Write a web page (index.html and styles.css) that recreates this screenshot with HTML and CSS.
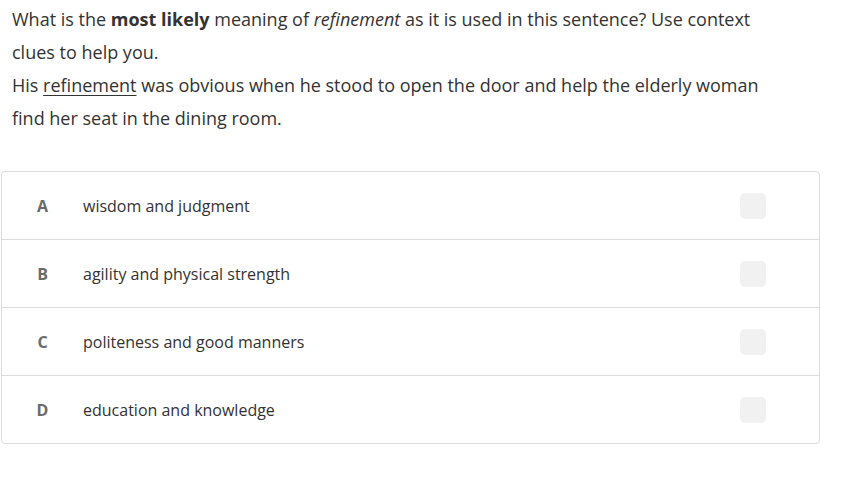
FILE: index.html
```html
<!DOCTYPE html>
<html>
<head>
<meta charset="utf-8">
<link rel="stylesheet" href="styles.css">
</head>
<body>
<div class="page">
  <div class="question">
    <p class="prompt">What is the <strong>most likely</strong> meaning of <em>refinement</em> as it is used in this sentence? Use context clues to help you.</p>
    <p class="passage">His <span class="u">refinement</span> was obvious when he stood to open the door and help the elderly woman find her seat in the dining room.</p>
  </div>
  <div class="choices">
    <div class="choice"><span class="letter">A</span><span class="text">wisdom and judgment</span><span class="box"></span></div>
    <div class="choice"><span class="letter">B</span><span class="text">agility and physical strength</span><span class="box"></span></div>
    <div class="choice"><span class="letter">C</span><span class="text">politeness and good manners</span><span class="box"></span></div>
    <div class="choice"><span class="letter">D</span><span class="text">education and knowledge</span><span class="box"></span></div>
  </div>
</div>
</body>
</html>
```
FILE: styles.css
```css
html, body {
  margin: 0;
  padding: 0;
  background: #fff;
}
body {
  font-family: "Open Sans", "Liberation Sans", sans-serif;
  color: #333;
}
.page {
  width: 820px;
  padding: 3px 0 0 1px;
}
.question {
  padding: 0 11px;
  font-size: 18px;
  line-height: 33px;
  width: 775px;
}
.question p {
  margin: 0;
}
.question strong {
  font-weight: 700;
}
.u {
  text-decoration: underline;
  text-underline-offset: 3px;
  text-decoration-thickness: 1px;
}
.choices {
  margin-top: 36px;
  border: 1px solid #dcdcdc;
  border-radius: 4px;
  width: 817px;
}
.choice {
  display: flex;
  align-items: center;
  height: 68px;
  padding-top: 1px;
  box-sizing: border-box;
  border-top: 1px solid #dcdcdc;
}
.choice:first-child {
  border-top: none;
  height: 67px;
}
.letter {
  width: 81px;
  text-align: center;
  font-weight: 700;
  font-size: 16px;
  color: #6b6b6b;
}
.text {
  flex: 1;
  font-size: 16px;
  color: #333;
}
.box {
  width: 26px;
  height: 26px;
  border-radius: 5px;
  background: #f1f1f1;
  margin-right: 53px;
}
```
